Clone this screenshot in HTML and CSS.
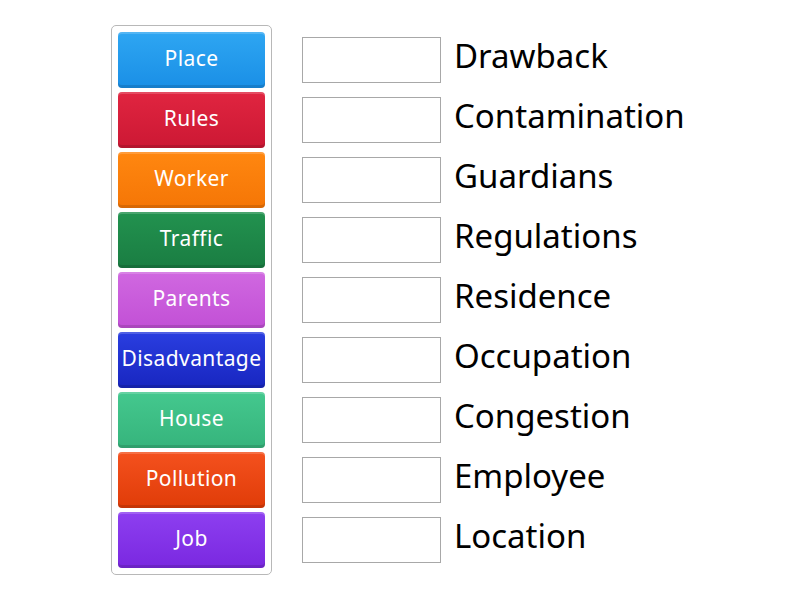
FILE: index.html
```html
<!DOCTYPE html>
<html>
<head>
<meta charset="utf-8">
<link rel="stylesheet" href="styles.css">
</head>
<body>
<div class="page">
  <div class="bank">
    <div class="tile blue">Place</div>
    <div class="tile red">Rules</div>
    <div class="tile orange">Worker</div>
    <div class="tile green">Traffic</div>
    <div class="tile pink">Parents</div>
    <div class="tile navy">Disadvantage</div>
    <div class="tile mint">House</div>
    <div class="tile vermil">Pollution</div>
    <div class="tile purple">Job</div>
  </div>
  <div class="targets">
    <div class="row"><div class="slot"></div><span class="word">Drawback</span></div>
    <div class="row"><div class="slot"></div><span class="word">Contamination</span></div>
    <div class="row"><div class="slot"></div><span class="word">Guardians</span></div>
    <div class="row"><div class="slot"></div><span class="word">Regulations</span></div>
    <div class="row"><div class="slot"></div><span class="word">Residence</span></div>
    <div class="row"><div class="slot"></div><span class="word">Occupation</span></div>
    <div class="row"><div class="slot"></div><span class="word">Congestion</span></div>
    <div class="row"><div class="slot"></div><span class="word">Employee</span></div>
    <div class="row"><div class="slot"></div><span class="word">Location</span></div>
  </div>
</div>
</body>
</html>
```
FILE: styles.css
```css
html, body {
  margin: 0;
  padding: 0;
  background: #fff;
  font-family: "Noto Sans", "Lato", sans-serif;
}
.page {
  display: flex;
  align-items: flex-start;
  padding: 25px 0 0 111px;
}
.bank {
  width: 147px;
  padding: 6px;
  border: 1px solid #b8b8b8;
  border-radius: 5px;
  display: flex;
  flex-direction: column;
  gap: 4px;
}
.tile {
  height: 56px;
  border-radius: 4px;
  color: #fff;
  font-size: 21px;
  letter-spacing: 0.4px;
  display: flex;
  align-items: center;
  justify-content: center;
  padding-bottom: 4px;
  box-sizing: border-box;
  white-space: nowrap;
  box-shadow: inset 0 2px 0 rgba(255,255,255,0.18), inset 0 -3px 0 rgba(0,0,0,0.12);
}
.blue { background: linear-gradient(#2ea6f2, #1a8fe6); }
.red { background: linear-gradient(#e02540, #cc1834); }
.orange { background: linear-gradient(#ff8710, #f57606); }
.green { background: linear-gradient(#22924f, #1a7d42); }
.pink { background: linear-gradient(#d068e0, #c250d6); }
.navy { background: linear-gradient(#2a3ee0, #1826c0); }
.mint { background: linear-gradient(#44c88e, #36b47c); }
.vermil { background: linear-gradient(#f4511e, #e03c08); }
.purple { background: linear-gradient(#8d3ff0, #7a28e0); }
.targets {
  margin-left: 30px;
  padding-top: 12px;
  display: flex;
  flex-direction: column;
  gap: 14px;
}
.row {
  display: flex;
  align-items: center;
  height: 46px;
}
.slot {
  width: 137px;
  height: 44px;
  border: 1px solid #a8a8a8;
  background: #fff;
}
.word {
  margin-left: 13px;
  margin-bottom: 9px;
  font-size: 33px;
  color: #000;
  line-height: 1;
}
```
